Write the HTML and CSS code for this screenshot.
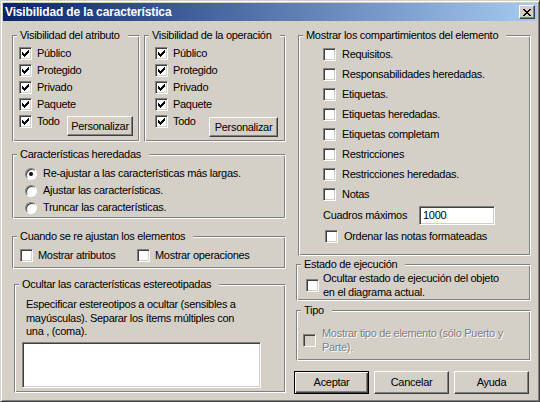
FILE: index.html
```
<!DOCTYPE html>
<html lang="es">
<head>
<meta charset="utf-8">
<title>Visibilidad de la característica</title>
<link rel="stylesheet" href="styles.css">
</head>
<body>
<div class="window">
  <div class="titlebar">
    <span class="title">Visibilidad de la característica</span>
    <span class="close"><svg width="8" height="7" viewBox="0 0 8 7"><path d="M0 0h2v1h-2zM6 0h2v1h-2zM1 1h2v1h-2zM5 1h2v1h-2zM2 2h4v1h-4zM3 3h2v1h-2zM2 4h4v1h-4zM1 5h2v1h-2zM5 5h2v1h-2zM0 6h2v1h-2zM6 6h2v1h-2z" fill="#000"/></svg></span>
  </div>
  <div class="client">
    <div class="col-left">
      <div class="vis-row">
        <fieldset class="group g-attr">
          <legend>Visibilidad del atributo</legend>
          <div class="gbody">
            <div class="check"><span class="box on"><svg class="tick" width="7" height="7" viewBox="0 0 7 7"><path d="M6 0h1v1h-1zM5 1h2v1h-2zM0 2h1v1h-1zM4 2h3v1h-3zM0 3h2v1h-2zM3 3h3v1h-3zM0 4h5v1h-5zM1 5h3v1h-3zM2 6h1v1h-1z"/></svg></span><span>Público</span></div>
            <div class="check"><span class="box on"><svg class="tick" width="7" height="7" viewBox="0 0 7 7"><path d="M6 0h1v1h-1zM5 1h2v1h-2zM0 2h1v1h-1zM4 2h3v1h-3zM0 3h2v1h-2zM3 3h3v1h-3zM0 4h5v1h-5zM1 5h3v1h-3zM2 6h1v1h-1z"/></svg></span><span>Protegido</span></div>
            <div class="check"><span class="box on"><svg class="tick" width="7" height="7" viewBox="0 0 7 7"><path d="M6 0h1v1h-1zM5 1h2v1h-2zM0 2h1v1h-1zM4 2h3v1h-3zM0 3h2v1h-2zM3 3h3v1h-3zM0 4h5v1h-5zM1 5h3v1h-3zM2 6h1v1h-1z"/></svg></span><span>Privado</span></div>
            <div class="check"><span class="box on"><svg class="tick" width="7" height="7" viewBox="0 0 7 7"><path d="M6 0h1v1h-1zM5 1h2v1h-2zM0 2h1v1h-1zM4 2h3v1h-3zM0 3h2v1h-2zM3 3h3v1h-3zM0 4h5v1h-5zM1 5h3v1h-3zM2 6h1v1h-1z"/></svg></span><span>Paquete</span></div>
            <div class="todo-row">
              <div class="check"><span class="box on"><svg class="tick" width="7" height="7" viewBox="0 0 7 7"><path d="M6 0h1v1h-1zM5 1h2v1h-2zM0 2h1v1h-1zM4 2h3v1h-3zM0 3h2v1h-2zM3 3h3v1h-3zM0 4h5v1h-5zM1 5h3v1h-3zM2 6h1v1h-1z"/></svg></span><span>Todo</span></div>
              <button class="btn btn-small">Personalizar</button>
            </div>
          </div>
        </fieldset>
        <fieldset class="group g-op">
          <legend>Visibilidad de la operación</legend>
          <div class="gbody">
            <div class="check"><span class="box on"><svg class="tick" width="7" height="7" viewBox="0 0 7 7"><path d="M6 0h1v1h-1zM5 1h2v1h-2zM0 2h1v1h-1zM4 2h3v1h-3zM0 3h2v1h-2zM3 3h3v1h-3zM0 4h5v1h-5zM1 5h3v1h-3zM2 6h1v1h-1z"/></svg></span><span>Público</span></div>
            <div class="check"><span class="box on"><svg class="tick" width="7" height="7" viewBox="0 0 7 7"><path d="M6 0h1v1h-1zM5 1h2v1h-2zM0 2h1v1h-1zM4 2h3v1h-3zM0 3h2v1h-2zM3 3h3v1h-3zM0 4h5v1h-5zM1 5h3v1h-3zM2 6h1v1h-1z"/></svg></span><span>Protegido</span></div>
            <div class="check"><span class="box on"><svg class="tick" width="7" height="7" viewBox="0 0 7 7"><path d="M6 0h1v1h-1zM5 1h2v1h-2zM0 2h1v1h-1zM4 2h3v1h-3zM0 3h2v1h-2zM3 3h3v1h-3zM0 4h5v1h-5zM1 5h3v1h-3zM2 6h1v1h-1z"/></svg></span><span>Privado</span></div>
            <div class="check"><span class="box on"><svg class="tick" width="7" height="7" viewBox="0 0 7 7"><path d="M6 0h1v1h-1zM5 1h2v1h-2zM0 2h1v1h-1zM4 2h3v1h-3zM0 3h2v1h-2zM3 3h3v1h-3zM0 4h5v1h-5zM1 5h3v1h-3zM2 6h1v1h-1z"/></svg></span><span>Paquete</span></div>
            <div class="todo-row">
              <div class="check"><span class="box on"><svg class="tick" width="7" height="7" viewBox="0 0 7 7"><path d="M6 0h1v1h-1zM5 1h2v1h-2zM0 2h1v1h-1zM4 2h3v1h-3zM0 3h2v1h-2zM3 3h3v1h-3zM0 4h5v1h-5zM1 5h3v1h-3zM2 6h1v1h-1z"/></svg></span><span>Todo</span></div>
              <button class="btn btn-small btn-op">Personalizar</button>
            </div>
          </div>
        </fieldset>
      </div>
      <fieldset class="group g-inh">
        <legend>Características heredadas</legend>
        <div class="gbody">
          <div class="opt"><span class="radio on"></span><span>Re-ajustar a las características más largas.</span></div>
          <div class="opt"><span class="radio"></span><span>Ajustar las características.</span></div>
          <div class="opt"><span class="radio"></span><span>Truncar las características.</span></div>
        </div>
      </fieldset>
      <fieldset class="group g-resize">
        <legend>Cuando se re ajustan los elementos</legend>
        <div class="gbody">
          <div class="check first"><span class="box"></span><span>Mostrar atributos</span></div>
          <div class="check"><span class="box"></span><span>Mostrar operaciones</span></div>
        </div>
      </fieldset>
      <fieldset class="group g-stereo">
        <legend>Ocultar las características estereotipadas</legend>
        <div class="gbody">
          <p class="hint">Especificar estereotipos a ocultar (sensibles a<br>mayúsculas). Separar los ítems múltiples con<br>una , (coma).</p>
          <textarea class="memo"></textarea>
        </div>
      </fieldset>
    </div>
    <div class="col-right">
      <fieldset class="group g-comp">
        <legend>Mostrar los compartimientos del elemento</legend>
        <div class="gbody">
          <div class="check"><span class="box"></span><span>Requisitos.</span></div>
          <div class="check"><span class="box"></span><span>Responsabilidades heredadas.</span></div>
          <div class="check"><span class="box"></span><span>Etiquetas.</span></div>
          <div class="check"><span class="box"></span><span>Etiquetas heredadas.</span></div>
          <div class="check"><span class="box"></span><span>Etiquetas completam</span></div>
          <div class="check"><span class="box"></span><span>Restricciones</span></div>
          <div class="check"><span class="box"></span><span>Restricciones heredadas.</span></div>
          <div class="check"><span class="box"></span><span>Notas</span></div>
          <div class="field"><span class="field-label">Cuadros máximos</span><input class="num" type="text" value="1000"></div>
          <div class="check sort"><span class="box"></span><span>Ordenar las notas formateadas</span></div>
        </div>
      </fieldset>
      <fieldset class="group g-exec">
        <legend>Estado de ejecución</legend>
        <div class="gbody">
          <div class="check multi"><span class="box"></span><span>Ocultar estado de ejecución del objeto<br>en el diagrama actual.</span></div>
        </div>
      </fieldset>
      <fieldset class="group g-type disabled">
        <legend>Tipo</legend>
        <div class="gbody">
          <div class="check multi"><span class="box off"></span><span class="dim">Mostrar tipo de elemento (sólo Puerto y<br>Parte).</span></div>
        </div>
      </fieldset>
      <div class="buttons">
        <button class="btn btn-default">Aceptar</button>
        <button class="btn">Cancelar</button>
        <button class="btn">Ayuda</button>
      </div>
    </div>
  </div>
</div>
</body>
</html>
```
FILE: styles.css
```
* { box-sizing: border-box; }

body {
  margin: 0;
  background: #d4d0c8;
  font-family: "Liberation Sans", Arial, sans-serif;
  font-size: 11px;
  line-height: 13px;
  letter-spacing: -0.3px;
  color: #000;
}

.window {
  width: 540px;
  height: 402px;
  background: #d4d0c8;
  border: 1px solid;
  border-color: #d4d0c8 #404040 #404040 #d4d0c8;
  box-shadow: inset 1px 1px #fff, inset -1px -1px #808080;
  padding: 2px;
  display: flex;
  flex-direction: column;
}

.titlebar {
  height: 18px;
  flex: none;
  display: flex;
  align-items: center;
  padding: 0 2px 0 2px;
  background: linear-gradient(to right, #0a246a, #a6caf0);
}

.title {
  flex: 1;
  color: #fff;
  font-weight: bold;
  font-size: 12px;
  line-height: 18px;
  letter-spacing: -0.15px;
}

.close {
  width: 16px;
  height: 14px;
  background: #d4d0c8;
  border: 1px solid;
  border-color: #fff #404040 #404040 #fff;
  box-shadow: inset -1px -1px #808080;
  display: flex;
  align-items: center;
  justify-content: center;
}

.close svg { display: block; }

.client {
  display: grid;
  grid-template-columns: 274px 235px;
  column-gap: 10px;
  align-items: start;
  padding: 8px 0 0 9px;
}

.col-left, .col-right {
  display: flex;
  flex-direction: column;
}

.group {
  margin: 0;
  padding: 0;
  min-width: 0;
  border: 1px solid;
  border-color: #808080 #fff #fff #808080;
  box-shadow: inset 1px 1px #fff, inset -1px -1px #808080;
}

.group > legend {
  margin-left: 4px;
  padding: 0 8px 0 3px;
  background: #d4d0c8;
  line-height: 13px;
}

.vis-row {
  display: flex;
  gap: 4px;
}

.g-attr { width: 128px; height: 113px; }
.g-attr .gbody { padding: 3px 6px 0 6px; }
.g-op { width: 142px; height: 113px; }
.g-op .gbody { padding: 3px 7px 0 10px; }

.check {
  display: flex;
  align-items: center;
  height: 17px;
}

.box {
  flex: none;
  width: 13px;
  height: 13px;
  margin-right: 5px;
  background: #fff;
  border: 1px solid;
  border-color: #808080 #fff #fff #808080;
  box-shadow: inset 1px 1px #404040, inset -1px -1px #d4d0c8;
}

.box.off { background: #d4d0c8; }

.tick {
  display: block;
  margin: 2px 0 0 2px;
  fill: #000;
}

.todo-row {
  display: flex;
  align-items: flex-start;
}

.btn {
  font: inherit;
  letter-spacing: inherit;
  color: #000;
  background: #d4d0c8;
  border: 1px solid;
  border-color: #fff #404040 #404040 #fff;
  box-shadow: inset -1px -1px #808080;
  padding: 0;
  width: 75px;
  height: 23px;
  margin: 0;
}

.btn-small {
  width: 66px;
  height: 20px;
  margin: 3px 0 0 auto;
}

.btn-op { width: 69px; margin-top: 4px; }

.btn-default {
  border-color: #000;
  box-shadow: inset 1px 1px #fff, inset -1px -1px #404040, inset -2px -2px #808080;
}

.g-inh { height: 71px; margin-top: 6px; }
.g-inh .gbody { padding: 4px 0 0 12px; }

.opt {
  display: flex;
  align-items: center;
  height: 17px;
}

.radio {
  flex: none;
  position: relative;
  width: 12px;
  height: 12px;
  margin-right: 6px;
  border-radius: 50%;
  background: #fff;
  border: 1px solid;
  border-color: #808080 #fff #fff #808080;
  box-shadow: inset 1px 1px #404040;
}

.radio.on::after {
  content: "";
  position: absolute;
  left: 3px;
  top: 3px;
  width: 4px;
  height: 4px;
  border-radius: 50%;
  background: #000;
}

.g-resize { height: 39px; margin-top: 11px; }
.g-resize .gbody { display: flex; padding: 4px 0 0 7px; }
.g-resize .check.first { width: 117px; }

.g-stereo { width: 272px; height: 115px; margin: 9px 0 0 2px; }
.g-stereo .gbody { padding: 7px 0 0 11px; }

.hint {
  margin: 0;
  line-height: 13.5px;
}

.memo {
  display: block;
  width: 239px;
  height: 46px;
  margin: 3px 0 0 -4px;
  resize: none;
  background: #fff;
  border: 1px solid;
  border-color: #808080 #fff #fff #808080;
  box-shadow: inset 1px 1px #404040, inset -1px -1px #d4d0c8;
  font: inherit;
}

.g-comp { width: 233px; height: 227px; margin-left: 2px; }
.g-comp .gbody { padding: 2px 0 0 24px; }
.g-comp .check { height: 20px; }
.g-comp .box { margin-right: 6px; }
.g-comp .check.sort { margin-left: 2px; }

.field {
  display: flex;
  align-items: center;
  height: 22px;
}

.field-label { width: 96px; }

.num {
  width: 76px;
  height: 19px;
  padding: 0 0 0 3px;
  margin: 0;
  font: inherit;
  letter-spacing: inherit;
  color: #000;
  background: #fff;
  border: 1px solid;
  border-color: #808080 #fff #fff #808080;
  box-shadow: inset 1px 1px #404040, inset -1px -1px #d4d0c8;
  outline: none;
}

.check.multi { height: auto; }
.check.multi > span:last-child { line-height: 14px; }

.g-exec { height: 43px; margin-top: 2px; }
.g-exec .gbody { padding: 0 0 0 9px; }
.g-exec .box { margin-right: 4px; }

.g-type { height: 57px; margin-top: 3px; }
.g-type .gbody { padding: 9px 0 0 6px; }
.g-type .box { margin-right: 6px; }

.dim {
  color: #808080;
  text-shadow: 1px 1px #fff;
}

.buttons {
  display: flex;
  gap: 5px;
  margin: 10px 0 0 -2px;
}
```
